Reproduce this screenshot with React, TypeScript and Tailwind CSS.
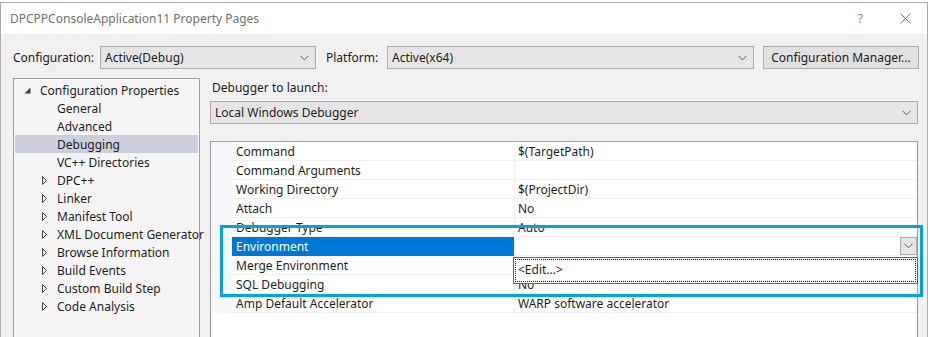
import React from "react";

const font = { fontFamily: '"Noto Sans", "Open Sans", sans-serif' };

function Chevron({ className = "" }: { className?: string }) {
  return (
    <svg width="9" height="6" viewBox="0 0 9 6" className={className}>
      <path d="M0.5 0.8 L4.5 4.8 L8.5 0.8" fill="none" stroke="#606060" strokeWidth="1" />
    </svg>
  );
}

function Select({ text, className }: { text: string; className: string }) {
  return (
    <div className={`flex h-[23px] items-center justify-between border border-[#acacac] bg-[#e5e5e5] pl-[4px] pr-[6px] ${className}`}>
      <span className="pt-[1px]">{text}</span>
      <Chevron />
    </div>
  );
}

type TreeItem = { label: string; level: 0 | 1; expander?: "open" | "closed"; selected?: boolean };

const tree: TreeItem[] = [
  { label: "Configuration Properties", level: 0, expander: "open" },
  { label: "General", level: 1 },
  { label: "Advanced", level: 1 },
  { label: "Debugging", level: 1, selected: true },
  { label: "VC++ Directories", level: 1 },
  { label: "DPC++", level: 1, expander: "closed" },
  { label: "Linker", level: 1, expander: "closed" },
  { label: "Manifest Tool", level: 1, expander: "closed" },
  { label: "XML Document Generator", level: 1, expander: "closed" },
  { label: "Browse Information", level: 1, expander: "closed" },
  { label: "Build Events", level: 1, expander: "closed" },
  { label: "Custom Build Step", level: 1, expander: "closed" },
  { label: "Code Analysis", level: 1, expander: "closed" },
];

const rows: { name: string; value: string; selected?: boolean }[] = [
  { name: "Command", value: "$(TargetPath)" },
  { name: "Command Arguments", value: "" },
  { name: "Working Directory", value: "$(ProjectDir)" },
  { name: "Attach", value: "No" },
  { name: "Debugger Type", value: "Auto" },
  { name: "Environment", value: "", selected: true },
  { name: "Merge Environment", value: "" },
  { name: "SQL Debugging", value: "No" },
  { name: "Amp Default Accelerator", value: "WARP software accelerator" },
];

export default function App() {
  return (
    <div className="relative h-[337px] w-[928px] overflow-hidden bg-white text-[12px] text-[#1e1e1e]" style={font}>
      <div className="mt-[2px] flex h-[335px] flex-col border-l border-r border-t border-[#aaaaaa] bg-[#f0f0f0]">
        {/* title bar */}
        <div className="flex h-[31px] shrink-0 items-center bg-white pl-[9px] pr-[16px]">
          <span className="text-[#707070]">DPCPPConsoleApplication11 Property Pages</span>
          <span className="ml-auto mr-[37px] text-[#8a8a8a]">?</span>
          <svg width="11" height="11" viewBox="0 0 11 11">
            <path d="M0.5 0.5 L10.5 10.5 M10.5 0.5 L0.5 10.5" stroke="#707070" strokeWidth="1" />
          </svg>
        </div>

        {/* configuration row */}
        <div className="mt-[12px] flex h-[23px] shrink-0 items-center pl-[12px]">
          <span className="w-[87px]">Configuration:</span>
          <Select text="Active(Debug)" className="w-[216px]" />
          <span className="ml-[10px] w-[61px]">Platform:</span>
          <Select text="Active(x64)" className="w-[367px]" />
          <div className="ml-[9px] flex h-[23px] w-[156px] items-center justify-center border border-[#acacac] bg-[#e1e1e1]">
            Configuration Manager...
          </div>
        </div>

        {/* main */}
        <div className="mt-[9px] flex min-h-0 flex-1 pl-[12px]">
          {/* tree */}
          <div className="w-[187px] border-l border-r border-t border-[#a0a0a0] bg-[#f5f5f5] pl-[1px] pr-[1px] pt-[2px]">
            {tree.map((t) => (
              <div
                key={t.label}
                className={`flex h-[18px] items-center pt-[1px] ${t.selected ? "bg-[#cccedb]" : ""}`}
              >
                {t.level === 0 ? (
                  <>
                    <svg width="7" height="7" viewBox="0 0 7 7" className="ml-[9px] mr-[9px]">
                      <path d="M6.5 0.5 L6.5 6.5 L0.5 6.5 Z" fill="#404040" />
                    </svg>
                    <span>{t.label}</span>
                  </>
                ) : (
                  <>
                    <div className="flex w-[42px] shrink-0 justify-end pr-[10px]">
                      {t.expander === "closed" && (
                        <svg width="5" height="9" viewBox="0 0 5 9">
                          <path d="M0.5 0.5 L4.5 4.5 L0.5 8.5 Z" fill="none" stroke="#404040" strokeWidth="1" />
                        </svg>
                      )}
                    </div>
                    <span className="whitespace-nowrap">{t.label}</span>
                  </>
                )}
              </div>
            ))}
          </div>

          {/* right pane */}
          <div className="ml-[10px] flex w-[708px] flex-col">
            <div className="flex h-[20px] items-center pl-[2px]">Debugger to launch:</div>
            <Select text="Local Windows Debugger" className="mt-[3px] w-[708px]" />
            <div className="mt-[17px] flex-1 border-l border-r border-t border-[#a0a0a0] bg-white">
              {rows.map((r) => (
                <div key={r.name} className="flex h-[19px]">
                  <div className="w-[21px] shrink-0 bg-[#f5f7fb]" />
                  <div
                    className={`flex w-[282px] shrink-0 items-center border-b pl-[4px] pt-[1px] ${
                      r.selected ? "border-[#0078d7] bg-[#0078d7] text-white" : "border-[#f0f0f0]"
                    }`}
                  >
                    {r.name}
                  </div>
                  <div className="flex flex-1 items-center border-b border-l border-[#f0f0f0] pl-[3px] pt-[1px]">
                    {r.value}
                    {r.selected && (
                      <div className="-mt-[1px] ml-auto flex h-[18px] w-[17px] items-center justify-center border border-[#adadad] bg-[#e5e5e5]">
                        <Chevron />
                      </div>
                    )}
                  </div>
                </div>
              ))}
            </div>
          </div>
        </div>
      </div>

      {/* dropdown list */}
      <div className="absolute left-[513px] top-[257px] h-[27px] w-[405px] border border-[#646464] bg-white p-[1px]">
        <div className="flex h-full items-start border border-dotted border-[#202020] pl-[2px] pt-[1px]">&lt;Edit...&gt;</div>
      </div>

      {/* annotation rectangle */}
      <div className="pointer-events-none absolute left-[220px] top-[225px] h-[72px] w-[703px] border-[3px] border-[#00a2e8]" />
    </div>
  );
}
